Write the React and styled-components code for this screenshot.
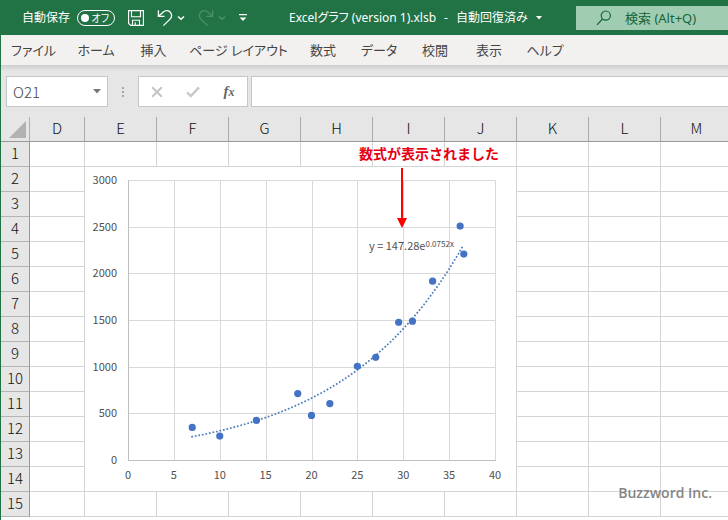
import React, { useState } from 'react';
import styled, { createGlobalStyle } from 'styled-components';

const tabs = [
  { label: 'ファイル', basis: 65 },
  { label: 'ホーム', basis: 60 },
  { label: '挿入', basis: 55 },
  { label: 'ページ レイアウト', basis: 115 },
  { label: '数式', basis: 54 },
  { label: 'データ', basis: 58 },
  { label: '校閲', basis: 54 },
  { label: '表示', basis: 54 },
  { label: 'ヘルプ', basis: 58 },
];

const columns = ['D', 'E', 'F', 'G', 'H', 'I', 'J', 'K', 'L', 'M'];
const rows = Array.from({ length: 15 }, (_, i) => i + 1);

const points = [
  [7, 349], [10, 256], [14, 424], [18.5, 712], [20, 478], [22, 605], [25, 1004],
  [27, 1100], [29.5, 1476], [31, 1487], [33.2, 1916], [36.2, 2506], [36.6, 2206],
];

// plot area inside the chart frame
const plot = { left: 44, top: 14, width: 367, height: 280 };
const px = (v) => plot.left + (v / 40) * plot.width;
const py = (v) => plot.top + plot.height - (v / 3000) * plot.height;
const line = (n) => Math.round(n) + 0.5;

const xTicks = [0, 5, 10, 15, 20, 25, 30, 35, 40];
const yTicks = [0, 500, 1000, 1500, 2000, 2500, 3000];

const trend = Array.from({ length: 61 }, (_, i) => {
  const x = 6.9 + (i / 60) * 29.6;
  return `${px(x).toFixed(1)},${py(147.28 * Math.exp(0.0752 * x)).toFixed(1)}`;
}).join(' ');

const Chart = () => (
  <ChartFrame>
    <svg width="431" height="324" viewBox="1 1 431 324" role="img" aria-label="散布図">
      {xTicks.slice(1).map((t) => (
        <line key={t} className="grid" x1={line(px(t))} x2={line(px(t))} y1={plot.top} y2={plot.top + plot.height} />
      ))}
      {yTicks.slice(1).map((t) => (
        <line key={t} className="grid" x1={plot.left} x2={plot.left + plot.width + 1} y1={line(py(t))} y2={line(py(t))} />
      ))}
      <line className="axis" x1={line(px(0))} x2={line(px(0))} y1={plot.top} y2={plot.top + plot.height + 1} />
      <line className="axis" x1={plot.left} x2={plot.left + plot.width + 1} y1={line(py(0))} y2={line(py(0))} />
      <polyline className="trend" points={trend} />
      {points.map(([x, y]) => (
        <circle key={x} cx={px(x)} cy={py(y)} r="3.6" fill="#4472c4" />
      ))}
      {xTicks.map((t) => (
        <text key={t} x={px(t)} y="313" textAnchor="middle">{t}</text>
      ))}
      {yTicks.map((t) => (
        <text key={t} x="33" y={Math.round(py(t)) + 4} textAnchor="end">{t}</text>
      ))}
      <text x="285" y="84">
        y = 147.28e<tspan className="exp" dy="-3">0.0752x</tspan>
      </text>
    </svg>
  </ChartFrame>
);

const Chevron = () => (
  <svg width="8" height="6" viewBox="0 0 8 6" fill="none" stroke="currentColor" strokeWidth="1.5">
    <path d="M1 1.5 4 4.2 7 1.5" />
  </svg>
);

const App = () => {
  const [autoSave, setAutoSave] = useState(false);
  const [cell, setCell] = useState('O21');
  const [formula, setFormula] = useState('');

  return (
    <Window>
      <GlobalStyle />
      <TitleBar>
        <AutoSave>
          自動保存
          <input type="checkbox" checked={autoSave} onChange={() => setAutoSave(!autoSave)} />
          <Toggle>
            <i />
            <span>{autoSave ? 'オン' : 'オフ'}</span>
          </Toggle>
        </AutoSave>
        <QuickTools>
          <ToolButton aria-label="上書き保存" $width={16}>
            <svg width="16" height="16" viewBox="0 0 16 16" fill="none" stroke="currentColor" strokeWidth="1.1">
              <path d="M.6.6H15.4V15.4H2.6L.6 13.4Z" />
              <path d="M3.5.6V6.7H12.5V.6M4.5 15.4V10.3H11.5V15.4M7.2 15.4V12.2" />
            </svg>
          </ToolButton>
          <ToolButton aria-label="元に戻す" $width={28}>
            <svg width="16" height="18" viewBox="0 0 16 18" fill="none" stroke="currentColor" strokeWidth="1.3">
              <path d="M1.4 1.2V7.4H7.6" />
              <path d="M1.6 7.2 6 3.2C8.5 1 12 1.2 13.6 3.6 15 5.8 14.6 8.6 12.8 10.4L6.4 16.6" />
            </svg>
            <Chevron />
          </ToolButton>
          <ToolButton aria-label="やり直し" $width={28} disabled>
            <svg width="16" height="18" viewBox="0 0 16 18" fill="none" stroke="currentColor" strokeWidth="1.3">
              <path d="M14.6 1.2V7.4H8.4" />
              <path d="M14.4 7.2 10 3.2C7.5 1 4 1.2 2.4 3.6 1 5.8 1.4 8.6 3.2 10.4L9.6 16.6" />
            </svg>
            <Chevron />
          </ToolButton>
          <ToolButton aria-label="クイック アクセス ツール バーのカスタマイズ" $width={8}>
            <svg width="8" height="8" viewBox="0 0 8 8" fill="currentColor">
              <path d="M0 0H8V1.3H0ZM.6 3.4H7.4L4 7Z" />
            </svg>
          </ToolButton>
        </QuickTools>
        <FileName>
          <span>Excelグラフ (version 1).xlsb</span>
          <span>-</span>
          <span>自動回復済み</span>
          <svg width="6" height="4" viewBox="0 0 6 4" fill="currentColor"><path d="M0 0H6L3 3.5Z" /></svg>
        </FileName>
        <Search>
          <svg width="16" height="16" viewBox="0 0 16 16" fill="none" stroke="#17633a" strokeWidth="1.2">
            <circle cx="9.8" cy="5.6" r="4.6" />
            <path d="M6.5 9 1 14.8" />
          </svg>
          <input type="search" aria-label="検索" placeholder="検索 (Alt+Q)" />
        </Search>
      </TitleBar>

      <Ribbon>
        {tabs.map((tab) => (
          <Tab key={tab.label} $basis={tab.basis}>{tab.label}</Tab>
        ))}
      </Ribbon>

      <FormulaRow>
        <NameBox>
          <input aria-label="名前ボックス" value={cell} onChange={(e) => setCell(e.target.value)} />
          <button aria-label="名前の一覧">
            <svg width="8" height="5" viewBox="0 0 8 5" fill="#777"><path d="M0 0H8L4 4.5Z" /></svg>
          </button>
        </NameBox>
        <Grip width="2" height="10" viewBox="0 0 2 10" fill="#a8a8a8">
          <path d="M0 0H2V2H0ZM0 4H2V6H0ZM0 8H2V10H0Z" />
        </Grip>
        <FormulaTools>
          <button aria-label="キャンセル">
            <svg width="12" height="12" viewBox="0 0 12 12" fill="none" stroke="#c4c4c4" strokeWidth="2">
              <path d="M1.2 1.2 10.8 10.8M10.8 1.2 1.2 10.8" />
            </svg>
          </button>
          <button aria-label="入力">
            <svg width="14" height="12" viewBox="0 0 14 12" fill="none" stroke="#c8c8c8" strokeWidth="2.4">
              <path d="M1 6.4 4.8 10 13 1.4" />
            </svg>
          </button>
          <button aria-label="関数の挿入">
            <Fx>f<small>x</small></Fx>
          </button>
        </FormulaTools>
        <FormulaInput aria-label="数式バー" value={formula} onChange={(e) => setFormula(e.target.value)} />
      </FormulaRow>

      <Sheet>
        <Grid>
          <colgroup>
            <col width="29" />
            {columns.map((c) => <col key={c} width={c === 'D' ? 55 : 72} />)}
          </colgroup>
          <thead>
            <tr>
              <Corner aria-label="すべて選択">
                <svg width="17" height="17" viewBox="0 0 17 17" fill="#b2b2b2"><path d="M17 0V17H0Z" /></svg>
              </Corner>
              {columns.map((c) => <ColHead key={c} scope="col">{c}</ColHead>)}
            </tr>
          </thead>
          <tbody>
            {rows.map((r) => (
              <tr key={r}>
                <RowHead scope="row">{r}</RowHead>
                {columns.map((c) => <Cell key={c} />)}
              </tr>
            ))}
          </tbody>
        </Grid>
        <Chart />
        <Callout>
          数式が表示されました
          <svg width="12" height="62" viewBox="0 0 12 62" fill="#f00">
            <path d="M5 1H7V51H11L6 61 1 51H5Z" />
          </svg>
        </Callout>
        <Credit>Buzzword Inc.</Credit>
      </Sheet>
    </Window>
  );
};

const GlobalStyle = createGlobalStyle`
  * {
    box-sizing: border-box;
  }

  body {
    margin: 0;
    font-family: "Noto Sans", "Noto Sans CJK JP", sans-serif;
  }

  button, input {
    font: inherit;
    color: inherit;
    border: 0;
    padding: 0;
    background: none;
    font-feature-settings: inherit;
  }
`;

const Window = styled.div`
  display: flex;
  flex-direction: column;
  height: 100vh;
  overflow: hidden;
  border-left: 1px solid #217346;
  background: #e6e6e6;
  font-size: 12px;
  font-feature-settings: "palt";
`;

const TitleBar = styled.header`
  display: flex;
  align-items: center;
  flex: none;
  height: 35px;
  padding-left: 21px;
  background: #217346;
  color: #fff;
  line-height: 16px;
  white-space: nowrap;
`;

const AutoSave = styled.label`
  display: flex;
  align-items: center;
  gap: 7px;
  width: 94px;

  input {
    position: absolute;
    opacity: 0;
  }
`;

const Toggle = styled.span`
  display: flex;
  align-items: center;
  justify-content: space-between;
  width: 38px;
  height: 16px;
  padding: 0 5px 0 3px;
  border: 1px solid #fff;
  border-radius: 8px;
  font-size: 10px;
  line-height: 14px;

  i {
    width: 8px;
    height: 8px;
    border-radius: 50%;
    background: #fff;
  }
`;

const QuickTools = styled.div`
  display: flex;
  align-items: center;
  gap: 13px;
  margin-left: 12px;
`;

const ToolButton = styled.button`
  display: flex;
  align-items: center;
  justify-content: space-between;
  width: ${(p) => p.$width}px;

  &:disabled {
    color: #4c9069;
  }
`;

const FileName = styled.div`
  display: flex;
  flex: 1;
  align-items: center;
  gap: 8px;
  padding-left: 42px;
`;

const Search = styled.label`
  display: flex;
  align-items: center;
  gap: 13px;
  flex: 0 1 152px;
  height: 24px;
  padding-left: 20px;
  background: #a0cdb2;
  color: #17633a;
  font-size: 13px;

  svg {
    flex: none;
  }

  input {
    width: 100%;
    min-width: 0;
    outline: none;
  }

  input::placeholder {
    color: #17633a;
    opacity: 1;
  }
`;

const Ribbon = styled.nav`
  display: flex;
  flex: none;
  height: 30px;
  background: #f3f1f0;
  color: #444;
  font-size: 13px;
`;

const Tab = styled.button`
  flex: 0 0 ${(p) => p.$basis}px;
  padding-bottom: 1px;
  white-space: nowrap;
`;

const FormulaRow = styled.div`
  display: flex;
  align-items: center;
  flex: none;
  height: 52px;
  padding: 11px 0 10px 5px;
  background: linear-gradient(#cfcdcd, #e6e6e6 6px);
`;

const NameBox = styled.div`
  display: flex;
  align-items: center;
  width: 102px;
  height: 31px;
  padding: 0 6px;
  border: 1px solid #c6c6c6;
  background: #fff;
  color: #444;
  font-family: "Noto Sans CJK JP", sans-serif;
  font-size: 15px;
  font-weight: 300;

  input {
    flex: 1;
    min-width: 0;
  }

  button {
    display: flex;
  }
`;

const Grip = styled.svg`
  margin: 0 14px;
`;

const FormulaTools = styled.div`
  display: flex;
  align-items: center;
  width: 110px;
  height: 31px;
  border: 1px solid #c6c6c6;
  background: #fff;

  button {
    display: flex;
    flex: 1;
    align-items: center;
    justify-content: center;
  }
`;

const Fx = styled.span`
  color: #666;
  font: italic bold 15px "Liberation Serif", serif;

  small {
    font-size: 12px;
  }
`;

const FormulaInput = styled.input`
  flex: 1;
  height: 31px;
  margin-left: 3px;
  padding: 0 8px;
  border: 1px solid #c6c6c6;
  border-right: 0;
  background: #fff;
`;

const Sheet = styled.main`
  position: relative;
  flex: 1;
  overflow: hidden;
  background: #fff;
`;

const Grid = styled.table`
  width: 732px;
  table-layout: fixed;
  border-collapse: separate;
  border-spacing: 0;
  color: #111;
  font-family: "Noto Sans CJK JP", sans-serif;
  font-size: 15px;
  line-height: 22px;

  th {
    height: 25px;
    padding: 0 0 2px;
    background: #e6e6e6;
    font-weight: 300;
  }
`;

const Corner = styled.th`
  border-right: 1px solid #b0b0b0;
  border-bottom: 1px solid #999;

  svg {
    display: block;
    margin: 3px 3px 0 auto;
  }
`;

const ColHead = styled.th`
  border-right: 1px solid #aaa;
  border-bottom: 1px solid #999;
`;

const RowHead = styled.th`
  border-right: 1px solid #999;
  border-bottom: 1px solid #b4b4b4;
`;

const Cell = styled.td`
  height: 25px;
  padding: 0;
  border-right: 1px solid #d4d4d4;
  border-bottom: 1px solid #d4d4d4;
`;

const ChartFrame = styled.div`
  position: absolute;
  left: 83px;
  top: 49px;
  border: 1px solid #d4d4d4;
  background: #fff;

  svg {
    display: block;
  }

  .grid {
    stroke: #d9d9d9;
  }

  .axis {
    stroke: #bfbfbf;
  }

  .trend {
    fill: none;
    stroke: #4a7ab8;
    stroke-width: 1.7;
    stroke-dasharray: 1.7 1.9;
  }

  text {
    fill: #505050;
    font-family: "Noto Sans CJK JP", sans-serif;
    font-size: 11px;
  }

  .exp {
    font-size: 8px;
  }
`;

const Callout = styled.div`
  position: absolute;
  left: 358px;
  top: 25px;
  color: #e60012;
  font-size: 14px;
  font-weight: 700;
  font-feature-settings: normal;
  line-height: 24px;
  text-shadow: 0 0 2px #fff, 0 0 2px #fff, 0 0 2px #fff;

  svg {
    display: block;
    margin: 1px 0 0 37px;
  }
`;

const Credit = styled.footer`
  position: absolute;
  right: 16px;
  bottom: 17px;
  color: #858585;
  font-family: "Open Sans", sans-serif;
  font-size: 14px;
  font-weight: 600;
  line-height: 20px;
`;

export default App;
